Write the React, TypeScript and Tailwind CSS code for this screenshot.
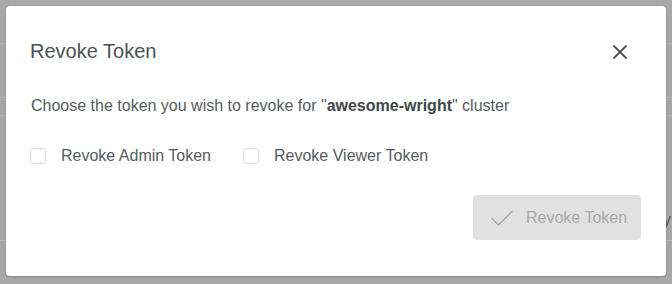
export default function App() {
  return (
    <div
      className="relative w-[672px] h-[284px] overflow-hidden bg-[#a8a8a8]"
      style={{ fontFamily: '"Liberation Sans", Arial, sans-serif' }}
    >
      {/* page behind the overlay */}
      <div className="flex flex-col">
        <div className="h-[44px] border-b border-[#b4b4b4]" />
        <div className="h-[54px] border-b border-[#b4b4b4]" />
        <div className="h-[18px] border-b border-[#b4b4b4]" />
        <div className="h-[124px] flex justify-end items-center pt-[84px] pr-[1px]">
          <span className="text-[16px] text-[#5a5a5a]">y</span>
        </div>
        <div className="border-b border-[#b4b4b4]" />
      </div>

      {/* modal */}
      <div className="absolute left-[6px] top-[6px] w-[660px] h-[270px] bg-white rounded-[4px] shadow-[0_1px_3px_rgba(0,0,0,0.2)] flex flex-col">
        <div className="flex items-center justify-between pt-[31px] pl-[24px] pr-[39px]">
          <h2 className="text-[20px] leading-[28px] text-[#4b5157]">Revoke Token</h2>
          <button className="w-[14px] h-[14px] mt-[1px] text-[#4b5157]">
            <svg viewBox="0 0 14 14" width="14" height="14" fill="none" stroke="currentColor" strokeWidth="1.8" strokeLinecap="round">
              <path d="M1 1L13 13M13 1L1 13" />
            </svg>
          </button>
        </div>

        <p className="mt-[29px] pl-[25px] text-[16px] leading-[24px] text-[#555b61]">
          Choose the token you wish to revoke for "<span className="font-bold text-[#41464b]">awesome-wright</span>" cluster
        </p>

        <div className="mt-[26px] pl-[24px] flex items-center h-[24px] text-[16px] text-[#555b61]">
          <label className="flex items-center gap-[15px]">
            <span className="w-[16px] h-[16px] rounded-[3px] border border-[#d9dde1] bg-white" />
            Revoke Admin Token
          </label>
          <label className="flex items-center gap-[15px] ml-[32px]">
            <span className="w-[16px] h-[16px] rounded-[3px] border border-[#d9dde1] bg-white" />
            Revoke Viewer Token
          </label>
        </div>

        <div className="mt-[27px] flex justify-end pr-[25px]">
          <button
            disabled
            className="h-[45px] w-[168px] rounded-[4px] bg-[#e1e1e1] flex items-center pl-[18px] gap-[13px] text-[16px] text-[#a9a9a9]"
          >
            <svg viewBox="0 0 22 16" width="22" height="16" fill="none" stroke="#aaaaaa" strokeWidth="1.5" strokeLinecap="round" strokeLinejoin="round">
              <path d="M1 8.5L7.5 15L21 1.5" />
            </svg>
            Revoke Token
          </button>
        </div>
      </div>
    </div>
  );
}
